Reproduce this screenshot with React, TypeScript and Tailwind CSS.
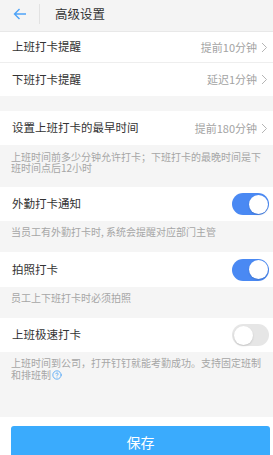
import { useState } from "react";
import { CircleHelp } from "lucide-react";

const cn = (...s: Array<string | false | null | undefined>) =>
  s.filter(Boolean).join(" ");

function Chevron() {
  return (
    <svg width="7" height="11" viewBox="0 0 7 11" className="ml-[4px]">
      <path d="M1 1l4.5 4.5L1 10" fill="none" stroke="#b5b5b5" strokeWidth="1" />
    </svg>
  );
}

function Toggle({ on, onClick }: { on: boolean; onClick: () => void }) {
  return (
    <button
      onClick={onClick}
      className={cn(
        "relative h-[22px] w-[37px] rounded-full transition",
        on ? "bg-[#4a89f3]" : "bg-[#e6e6e6]",
      )}
    >
      <span
        className={cn(
          "absolute top-[1.5px] h-[19px] w-[19px] rounded-full bg-white shadow-[0_1px_2px_rgba(0,0,0,0.15)]",
          on ? "left-[16.5px]" : "left-[1.5px]",
        )}
      />
    </button>
  );
}

function LinkRow({
  label,
  value,
  h,
  border,
}: {
  label: string;
  value: string;
  h: string;
  border?: boolean;
}) {
  return (
    <div
      className={cn(
        "flex items-center justify-between bg-white pl-[12px] pr-[5px]",
        h,
        border && "border-b border-[#eeeeee]",
      )}
    >
      <span className="text-[11.5px] text-[#333333]">{label}</span>
      <span className="flex items-center text-[11px] text-[#a3a3a3]">
        {value}
        <Chevron />
      </span>
    </div>
  );
}

function SwitchRow({
  label,
  h,
  on,
  onClick,
}: {
  label: string;
  h: string;
  on: boolean;
  onClick: () => void;
}) {
  return (
    <div className={cn("flex items-center justify-between bg-white pl-[12px] pr-[4px]", h)}>
      <span className="text-[11.5px] text-[#333333]">{label}</span>
      <Toggle on={on} onClick={onClick} />
    </div>
  );
}

export default function App() {
  const [outside, setOutside] = useState(true);
  const [photo, setPhoto] = useState(true);
  const [fast, setFast] = useState(false);

  return (
    <div
      className="w-[273px] bg-white"
      style={{ fontFamily: '"Noto Sans CJK SC", "Noto Sans", sans-serif' }}
    >
      {/* 顶栏 */}
      <div className="flex h-[32px] items-start border-b border-[#e8e8e8] bg-[#f4f4f4] pt-[4px]">
        <div className="flex h-[20px] w-[40px] items-center justify-center border-r border-[#e2e2e2]">
          <svg width="14" height="12" viewBox="0 0 14 12">
            <path
              d="M13 6H1.5M6.5 1L1.5 6l5 5"
              fill="none"
              stroke="#4da3f7"
              strokeWidth="1.4"
            />
          </svg>
        </div>
        <span className="ml-[15px] text-[12.5px] leading-[20px] text-[#333333]">
          高级设置
        </span>
      </div>

      <LinkRow label="上班打卡提醒" value="提前10分钟" h="h-[31px]" border />
      <LinkRow label="下班打卡提醒" value="延迟1分钟" h="h-[33px]" />

      <div className="h-[15px] bg-[#f5f5f5]" />

      <LinkRow label="设置上班打卡的最早时间" value="提前180分钟" h="h-[34px]" />
      <div className="h-[42px] bg-[#f5f5f5] px-[11px] pt-[6px] text-[10px] leading-[11px] text-[#a6a6a6]">
        上班时间前多少分钟允许打卡；下班打卡的最晚时间是下班时间点后12小时
      </div>

      <SwitchRow
        label="外勤打卡通知"
        h="h-[34px]"
        on={outside}
        onClick={() => setOutside(!outside)}
      />
      <div className="h-[31px] bg-[#f5f5f5] px-[11px] pt-[5px] text-[10px] leading-[11px] text-[#a6a6a6]">
        当员工有外勤打卡时, 系统会提醒对应部门主管
      </div>

      <SwitchRow
        label="拍照打卡"
        h="h-[35px]"
        on={photo}
        onClick={() => setPhoto(!photo)}
      />
      <div className="h-[31px] bg-[#f5f5f5] px-[11px] pt-[5px] text-[10px] leading-[11px] text-[#a6a6a6]">
        员工上下班打卡时必须拍照
      </div>

      <SwitchRow
        label="上班极速打卡"
        h="h-[34px]"
        on={fast}
        onClick={() => setFast(!fast)}
      />
      <div className="h-[65px] bg-[#f5f5f5] px-[11px] pt-[5px] text-[10px] leading-[12px] text-[#a6a6a6]">
        上班时间到公司，打开钉钉就能考勤成功。支持固定班制和排班制
        <CircleHelp
          size={10}
          strokeWidth={2}
          color="#4da3f7"
          className="ml-[1px] inline-block align-[-1px]"
        />
      </div>

      <div className="pb-[10px] pl-[11px] pr-[3px] pt-[9px]">
        <button className="h-[32px] w-full rounded-[3px] bg-[#3aabfd] text-[14px] text-white">
          保存
        </button>
      </div>
    </div>
  );
}
